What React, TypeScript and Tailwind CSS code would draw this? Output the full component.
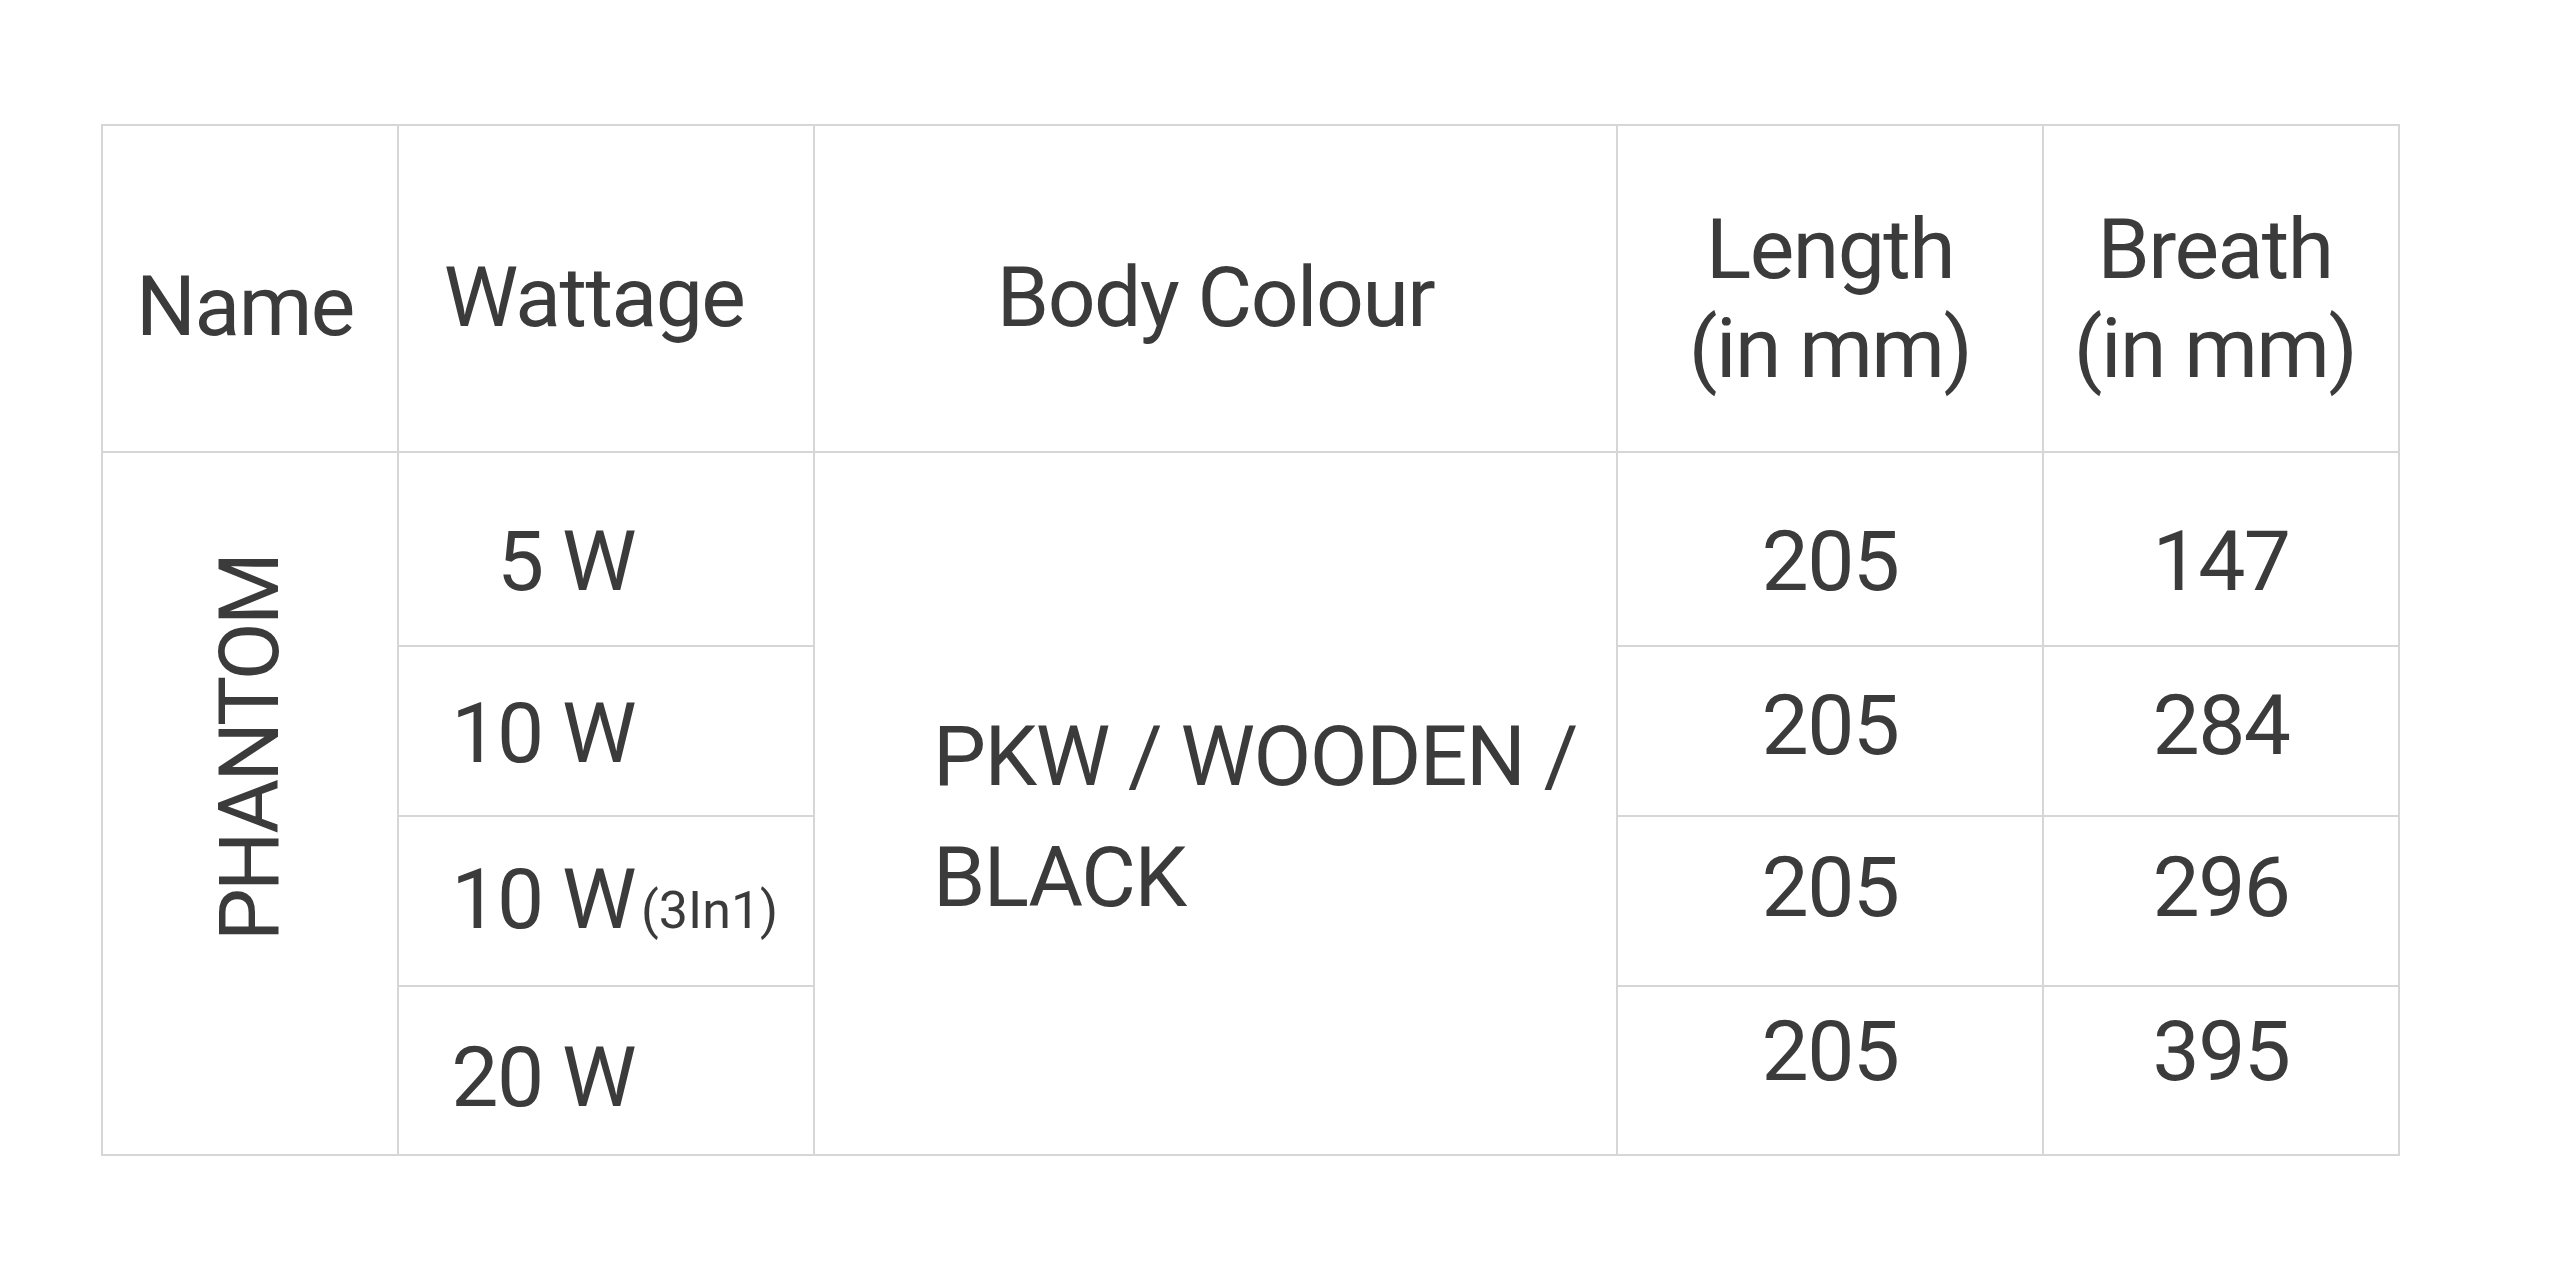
const cell = "border-2 border-[#d6d6d6] p-0 align-middle";

const rows = [
  { watt: "5 W", extra: "", wPad: "pt-[24px]", length: "205", breath: "147", nPad: "pt-[24px]" },
  { watt: "10 W", extra: "", wPad: "pt-[4px]", length: "205", breath: "284", nPad: "pb-[12px]" },
  { watt: "10 W", extra: "(3In1)", wPad: "pt-[8px]", length: "205", breath: "296", nPad: "pb-[28px]" },
  { watt: "20 W", extra: "", wPad: "pt-[14px]", length: "205", breath: "395", nPad: "pb-[38px]" },
];

const heights = ["h-[194px]", "h-[170px]", "h-[170px]", "h-[169px]"];

export default function App() {
  return (
    <div className="min-h-screen bg-white pt-[124px] pl-[101px] font-['Roboto',sans-serif] text-[#3b3b3b]">
      <table className="table-fixed border-collapse w-[2297px] text-[84px] leading-[99px] tracking-[-1.5px]">
        <colgroup>
          <col className="w-[296px]" />
          <col className="w-[416px]" />
          <col className="w-[803px]" />
          <col className="w-[426px]" />
          <col className="w-[356px]" />
        </colgroup>
        <thead>
          <tr className="h-[327px]">
            <th className={`${cell} font-normal text-center pt-[36px] pr-[10px]`}>Name</th>
            <th className={`${cell} font-normal text-center pt-[18px] pr-[24px]`}>Wattage</th>
            <th className={`${cell} font-normal text-center pt-[18px]`}>Body Colour</th>
            <th className={`${cell} font-normal text-center pt-[20px]`}>
              Length
              <br />
              (in mm)
            </th>
            <th className={`${cell} font-normal text-center pt-[20px] pr-[12px]`}>
              Breath
              <br />
              (in mm)
            </th>
          </tr>
        </thead>
        <tbody>
          {rows.map((r, i) => (
            <tr key={i} className={heights[i]}>
              {i === 0 && (
                <td rowSpan={4} className={`${cell} text-center pb-[90px]`}>
                  <span className="inline-block [writing-mode:vertical-rl] rotate-180 tracking-[-3px] leading-[84px]">
                    PHANTOM
                  </span>
                </td>
              )}
              <td className={`${cell} ${r.wPad} whitespace-nowrap`}>
                <span className="inline-block w-[236px] text-right">{r.watt}</span>
                {r.extra && <span className="ml-[6px] text-[52px] tracking-normal">{r.extra}</span>}
              </td>
              {i === 0 && (
                <td rowSpan={4} className={`${cell} pl-[118px] pt-[26px] leading-[121px]`}>
                  PKW / WOODEN /
                  <br />
                  BLACK
                </td>
              )}
              <td className={`${cell} text-center ${r.nPad}`}>{r.length}</td>
              <td className={`${cell} text-center ${r.nPad}`}>{r.breath}</td>
            </tr>
          ))}
        </tbody>
      </table>
    </div>
  );
}
